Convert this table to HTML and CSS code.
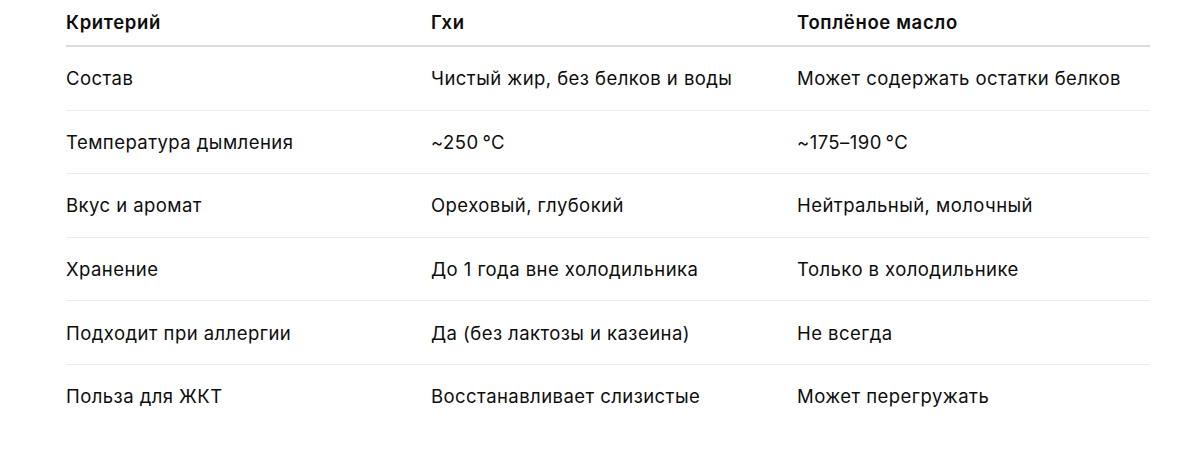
FILE: index.html
```html
<!DOCTYPE html>
<html lang="ru">
<head>
<meta charset="utf-8">
<link rel="stylesheet" href="styles.css">
</head>
<body>
<div class="wrap">
  <table class="cmp">
    <thead>
      <tr><th>Критерий</th><th>Гхи</th><th>Топлёное масло</th></tr>
    </thead>
    <tbody>
      <tr><td>Состав</td><td>Чистый жир, без белков и воды</td><td>Может содержать остатки белков</td></tr>
      <tr><td>Температура дымления</td><td>~250&#8239;°C</td><td>~175–190&#8239;°C</td></tr>
      <tr><td>Вкус и аромат</td><td>Ореховый, глубокий</td><td>Нейтральный, молочный</td></tr>
      <tr><td>Хранение</td><td>До 1 года вне холодильника</td><td>Только в холодильнике</td></tr>
      <tr><td>Подходит при аллергии</td><td>Да (без лактозы и казеина)</td><td>Не всегда</td></tr>
      <tr><td>Польза для ЖКТ</td><td>Восстанавливает слизистые</td><td>Может перегружать</td></tr>
    </tbody>
  </table>
</div>
</body>
</html>
```
FILE: styles.css
```css
html, body {
  margin: 0;
  padding: 0;
  background: #ffffff;
}
body {
  font-family: Inter, "Noto Sans", "Liberation Sans", sans-serif;
  color: #0d0d0d;
  font-size: 18.5px;
  letter-spacing: 0.44px;
}
.wrap {
  padding: 0 50px 0 66px;
}
.cmp {
  width: 1084px;
  border-collapse: collapse;
  table-layout: fixed;
}
.cmp th:nth-child(1), .cmp td:nth-child(1) { width: 365px; }
.cmp th:nth-child(2), .cmp td:nth-child(2) { width: 366px; }
.cmp th {
  text-align: left;
  font-weight: 600;
  letter-spacing: 0.65px;
  line-height: 26px;
  padding: 9px 0 10px 0;
  border-bottom: 2px solid #dcdcdc;
}
.cmp td {
  line-height: 26px;
  padding: 18.3px 0 18.3px 0;
  border-bottom: 1px solid #ececec;
}
.cmp tbody tr:last-child td {
  border-bottom: none;
}
```
